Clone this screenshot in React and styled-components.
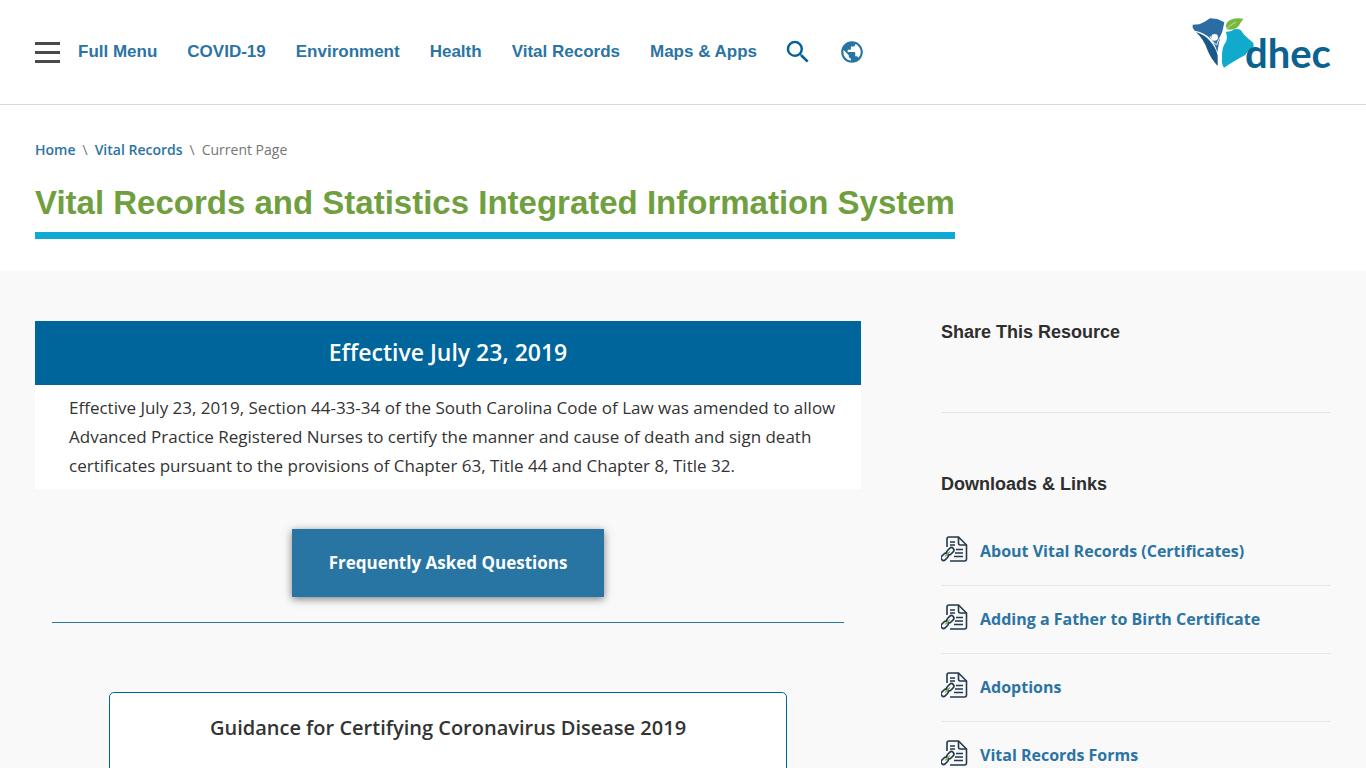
import React from 'react'
import styled, { createGlobalStyle } from 'styled-components'
import { MdPublic, MdSearch } from 'react-icons/md'


const navItems = [
  'COVID-19',
  'Environment',
  'Health',
  'Vital Records',
  'Maps & Apps',
]

const downloads = [
  'About Vital Records (Certificates)',
  'Adding a Father to Birth Certificate',
  'Adoptions',
  'Vital Records Forms',
]

const Logo = () => (
  <svg width="140" height="64" viewBox="0 0 140 64" role="img" aria-label="dhec">
    <g transform="translate(-1 -2) scale(0.3333)">
      <path fill="#2b6ca3" d="M8 29 L28 28 L44 20 L60 10 L82 12 L103 22 L98 46 Q90 66 87 84 Q84 98 82 112 Q76 88 60 70 Q42 52 14 47 L8 38Z" />
      <path fill="#1b5788" d="M18 51 Q46 60 60 78 Q78 98 83 122 L83 153 Q62 130 52 104 Q42 74 18 51Z" />
      <circle cx="74" cy="67" r="10" fill="#fff" />
      <path fill="none" stroke="#fff" strokeWidth="3" d="M60 64 Q68 84 80 90 Q84 74 97 56" />
      <path fill="#10abcc" d="M107 50 Q122 52 133 43 Q144 40 153 46 Q160 60 172 68 L190 84 Q193 92 188 99 Q176 104 166 120 Q142 132 102 158 Q94 148 96 130 Q94 98 108 80 Q114 66 107 50Z" />
      <path fill="#79b83d" d="M110 43 Q102 24 122 14 Q140 8 160 11 Q152 22 146 33 Q133 48 110 43Z" />
      <path fill="none" stroke="#e2f3ce" strokeWidth="2" d="M106 46 Q116 32 138 21" />
    </g>
    <text x="54" y="51" fill="#0b6290" fontFamily="Lato, sans-serif" fontSize="40" fontWeight="700">dhec</text>
  </svg>
)

const DocumentIcon = () => (
  <svg width="27" height="31" viewBox="0 0 27 31" fill="none" stroke="#22394f" strokeWidth="1.6" aria-hidden="true">
    <path d="M6 11 V3 Q6 1 8 1 H17.500 L25.500 9 V23 Q25.500 25 23.500 25 H9" />
    <path d="M17.500 1 V7 Q17.500 9 19.500 9 H25.500" />
    <path strokeWidth="1.3" d="M9 6 H14 M9 9 H14 M15 13.500 H22 M14 17 H22 M13 20.500 H22" />
    <g transform="rotate(-45 6.500 18)">
      <rect x="-1.500" y="15.500" width="8" height="5" rx="2.500" />
      <rect x="6.500" y="15.500" width="8" height="5" rx="2.500" />
      <path stroke="#8fb85a" d="M3 18 H10" />
    </g>
  </svg>
)

const Header = () => {
  return (
    <HeaderContainer>
      <HeaderNav>
        <NavLinks>
          <MenuButton type="button">
            <MenuBars aria-hidden="true">
              <span />
              <span />
              <span />
            </MenuBars>
            Full Menu
          </MenuButton>
          {navItems.map((item) => (
            <NavLink href="#" key={item}>{item}</NavLink>
          ))}
        </NavLinks>
        <IconButton type="button" aria-label="Search" color="#00629b">
          <MdSearch size={30} />
        </IconButton>
        <IconButton type="button" aria-label="Language" color="#2875a4">
          <MdPublic size={26} />
        </IconButton>
      </HeaderNav>
      <LogoLink href="#"><Logo /></LogoLink>
    </HeaderContainer>
  )
}

const Sidebar = () => {
  return (
    <aside>
      <ShareSection>
        <SidebarTitle>Share This Resource</SidebarTitle>
      </ShareSection>
      <SidebarTitle>Downloads &amp; Links</SidebarTitle>
      <DownloadList>
        {downloads.map((item) => (
          <DownloadItem key={item}>
            <DownloadLink href="#">
              <DocumentIcon />
              {item}
            </DownloadLink>
          </DownloadItem>
        ))}
      </DownloadList>
    </aside>
  )
}

const App = () => {
  return (
    <>
      <GlobalStyle />
      <Header />
      <TitleSection>
        <Breadcrumb aria-label="Breadcrumb">
          <a href="#">Home</a>
          <span>\</span>
          <a href="#">Vital Records</a>
          <span>\</span>
          <span>Current Page</span>
        </Breadcrumb>
        <PageTitle>Vital Records and Statistics Integrated Information System</PageTitle>
      </TitleSection>
      <Content>
        <Main>
          <Notice>
            <NoticeTitle>Effective July 23, 2019</NoticeTitle>
            <NoticeText>
              Effective July 23, 2019, Section 44-33-34 of the South Carolina Code of Law was amended to allow
              Advanced Practice Registered Nurses to certify the manner and cause of death and sign death
              certificates pursuant to the provisions of Chapter 63, Title 44 and Chapter 8, Title 32.
            </NoticeText>
          </Notice>
          <FaqLink href="#">Frequently Asked Questions</FaqLink>
          <Divider />
          <GuidanceCard>
            <GuidanceTitle>Guidance for Certifying Coronavirus Disease 2019</GuidanceTitle>
          </GuidanceCard>
        </Main>
        <Sidebar />
      </Content>
    </>
  )
}

export default App

const GlobalStyle = createGlobalStyle`
  * {
    box-sizing: border-box;
  }

  html {
    scrollbar-width: none;
  }

  body {
    margin: 0;
    background-color: #fff;
    color: #333;
    font-family: 'Open Sans', sans-serif;
  }

  a {
    color: #2b74a3;
    text-decoration: none;
  }
`

const HeaderContainer = styled.header`
  display: flex;
  justify-content: space-between;
  align-items: flex-start;
  padding: 17px 35px 23px;
  border-bottom: 1px solid #d8d8d8;
`

const HeaderNav = styled.nav`
  display: flex;
  align-items: center;
  gap: 26px;
  padding-top: 20px;
`

const NavLinks = styled.div`
  display: flex;
  align-items: center;
  gap: 30px;
`

const MenuButton = styled.button`
  display: flex;
  align-items: center;
  gap: 18px;
  padding: 0;
  border: 0;
  background: none;
  color: #2b74a3;
  font: bold 17px/30px 'Liberation Sans', sans-serif;
  cursor: pointer;
`

const MenuBars = styled.span`
  display: flex;
  flex-direction: column;
  gap: 6px;
  width: 25px;

  span {
    height: 3px;
    background-color: #4a4a4a;
  }
`

const NavLink = styled.a`
  font: bold 17px/30px 'Liberation Sans', sans-serif;
`

const IconButton = styled.button`
  display: flex;
  padding: 0;
  border: 0;
  background: none;
  color: ${({ color }) => color};
  cursor: pointer;
`

const LogoLink = styled.a`
  display: flex;
`

const TitleSection = styled.section`
  padding: 32px 35px;
`

const Breadcrumb = styled.nav`
  display: flex;
  gap: 7px;
  color: #767676;
  font-size: 14px;
  line-height: 26px;

  a {
    font-weight: 600;
  }
`

const PageTitle = styled.h1`
  width: fit-content;
  margin: 16px 0 0;
  padding-bottom: 6px;
  border-bottom: 7px solid #0eaad3;
  color: #709f3f;
  font: bold 33px/47px 'Liberation Sans', sans-serif;
`

const Content = styled.div`
  display: grid;
  grid-template-columns: 826fr 390fr;
  gap: 80px;
  padding: 50px 35px;
  background-color: #f9f9f9;
`

const Main = styled.main`
  display: flex;
  flex-direction: column;
  align-items: center;
`

const Notice = styled.section`
  background-color: #fff;
`

const NoticeTitle = styled.h2`
  margin: 0;
  padding-bottom: 2px;
  background-color: #00659b;
  color: #fff;
  font-size: 23px;
  font-weight: 600;
  line-height: 62px;
  text-align: center;
`

const NoticeText = styled.p`
  margin: 0;
  padding: 8px 24px 9px 34px;
  font-size: 17px;
  line-height: 29px;
`

const FaqLink = styled.a`
  margin-top: 40px;
  padding: 0 37px;
  background-color: #2875a4;
  box-shadow: 0 2px 8px rgba(0, 0, 0, 0.5);
  color: #fff;
  font-size: 17px;
  font-weight: 700;
  line-height: 68px;
`

const Divider = styled.hr`
  width: 96%;
  margin: 25px 0 69px;
  border: 0;
  border-top: 1px solid #2b74a3;
`

const GuidanceCard = styled.section`
  width: 82%;
  padding: 20px;
  border: 1px solid #00659b;
  border-radius: 5px;
  background-color: #fff;
`

const GuidanceTitle = styled.h2`
  margin: 0;
  padding-bottom: 40px;
  font-size: 20px;
  font-weight: 600;
  line-height: 30px;
  text-align: center;
`

const ShareSection = styled.section`
  margin-bottom: 60px;
  padding-bottom: 68px;
  border-bottom: 1px solid #e6e6e6;
`

const SidebarTitle = styled.h2`
  margin: 0;
  color: #2e2e2e;
  font: bold 18px/23px 'Liberation Sans', sans-serif;
`

const DownloadList = styled.ul`
  margin: 22px 0 0;
  padding: 0;
  list-style: none;
`

const DownloadItem = styled.li`
  padding: 18px 0;
  border-bottom: 1px solid #e6e6e6;
`

const DownloadLink = styled.a`
  display: flex;
  align-items: center;
  gap: 12px;
  font-size: 16px;
  font-weight: 700;
  line-height: 31px;
`
